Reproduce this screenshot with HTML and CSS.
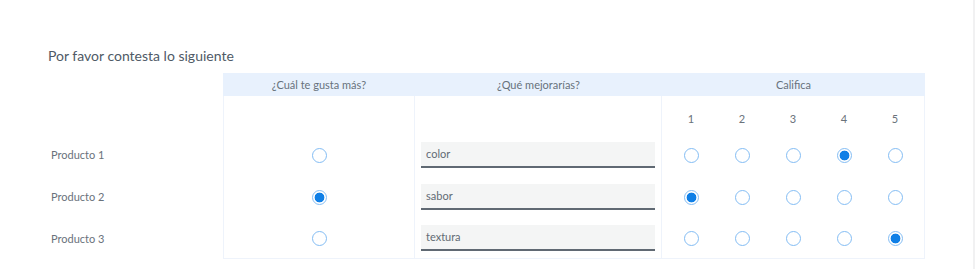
FILE: index.html
```html
<!DOCTYPE html>
<html lang="es">
<head>
<meta charset="utf-8">
<link rel="stylesheet" href="styles.css">
</head>
<body>
<div class="page">
  <h2 class="title">Por favor contesta lo siguiente</h2>
  <div class="matrix">
    <div class="cell blank"></div>
    <div class="cell head">¿Cuál te gusta más?</div>
    <div class="cell head">¿Qué mejorarías?</div>
    <div class="cell head">Califica</div>

    <div class="cell blank sub"></div>
    <div class="cell body c1 sub"></div>
    <div class="cell body c2 sub"></div>
    <div class="cell body c3 sub"><div class="scale nums"><span>1</span><span>2</span><span>3</span><span>4</span><span>5</span></div></div>

    <div class="cell label">Producto 1</div>
    <div class="cell body c1 row"><span class="radio"></span></div>
    <div class="cell body c2 row"><div class="input">color</div></div>
    <div class="cell body c3 row"><div class="scale"><span><i class="radio"></i></span><span><i class="radio"></i></span><span><i class="radio"></i></span><span><i class="radio on"></i></span><span><i class="radio"></i></span></div></div>

    <div class="cell label">Producto 2</div>
    <div class="cell body c1 row"><span class="radio on"></span></div>
    <div class="cell body c2 row"><div class="input">sabor</div></div>
    <div class="cell body c3 row"><div class="scale"><span><i class="radio on"></i></span><span><i class="radio"></i></span><span><i class="radio"></i></span><span><i class="radio"></i></span><span><i class="radio"></i></span></div></div>

    <div class="cell label">Producto 3</div>
    <div class="cell body c1 row last"><span class="radio"></span></div>
    <div class="cell body c2 row last"><div class="input">textura</div></div>
    <div class="cell body c3 row last"><div class="scale"><span><i class="radio"></i></span><span><i class="radio"></i></span><span><i class="radio"></i></span><span><i class="radio"></i></span><span><i class="radio on"></i></span></div></div>
  </div>
</div>
</body>
</html>
```

FILE: styles.css
```css
* { box-sizing: border-box; }
html, body { margin: 0; padding: 0; background: #fff; }
body {
  font-family: "Lato", "Noto Sans", sans-serif;
  color: #5f6872;
  width: 975px;
  height: 269px;
  overflow: hidden;
}
.page {
  width: 975px;
  height: 269px;
  border-right: 2px solid #f1f1f2;
  padding: 46px 0 0 48px;
}
.title {
  margin: 0 0 7px 0;
  font-size: 14px;
  line-height: 20px;
  font-weight: 400;
  color: #4f5a66;
}
.matrix {
  display: grid;
  grid-template-columns: 175px 192px 247px 263px;
}
.cell { font-size: 11px; line-height: 16px; }
.head {
  background: #e8f1fd;
  height: 23px;
  display: flex;
  align-items: center;
  justify-content: center;
  color: #67717c;
}
.sub { height: 38px; }
.body {
  border-right: 1px solid #eef3fb;
}
.c1 { border-left: 1px solid #eef3fb; }
.row {
  height: 42px;
  display: flex;
  align-items: center;
  justify-content: center;
}
.row.last { height: 41px; border-bottom: 1px solid #eef3fb; }
.label {
  height: 42px;
  display: flex;
  align-items: center;
  padding-left: 3px;
  color: #6a727b;
}
.c2.row { padding: 0 6px 0 6px; justify-content: flex-start; }
.input {
  width: 234px;
  height: 26px;
  background: #f4f5f5;
  border-bottom: 2px solid #606973;
  padding: 0 5px;
  display: flex;
  align-items: center;
  color: #626b74;
  line-height: 16px;
}
.scale {
  display: flex;
  justify-content: center;
  width: 100%;
}
.scale span {
  width: 51px;
  display: flex;
  justify-content: center;
}
.nums { padding-top: 15px; color: #6a727b; }
.radio {
  display: block;
  width: 15px;
  height: 15px;
  border-radius: 50%;
  border: 1px solid #84bdf4;
  background: #fff;
}
.radio.on {
  background: radial-gradient(circle, #0f7fe6 0 4.6px, #fff 5.2px);
}
```
